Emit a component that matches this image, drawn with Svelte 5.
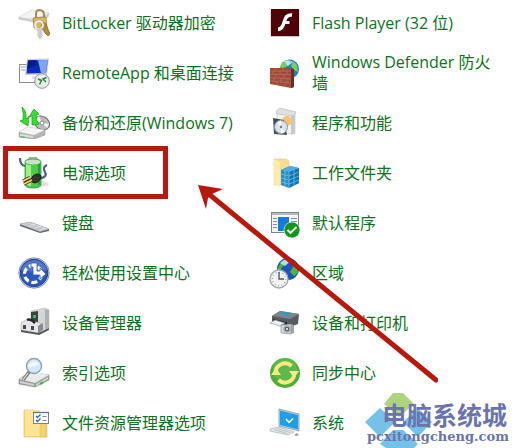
<script>
  const columns = [
    [
      ['bitlocker', 'BitLocker 驱动器加密'],
      ['remote', 'RemoteApp 和桌面连接'],
      ['backup', '备份和还原(Windows 7)'],
      ['power', '电源选项'],
      ['keyboard', '键盘'],
      ['ease', '轻松使用设置中心'],
      ['devices', '设备管理器'],
      ['index', '索引选项'],
      ['explorer', '文件资源管理器选项']
    ],
    [
      ['flash', 'Flash Player (32 位)'],
      ['firewall', 'Windows Defender 防火墙'],
      ['programs', '程序和功能'],
      ['workfolders', '工作文件夹'],
      ['defaults', '默认程序'],
      ['region', '区域'],
      ['printers', '设备和打印机'],
      ['sync', '同步中心'],
      ['system', '系统']
    ]
  ];
</script>

{#snippet icon(name)}
  <svg class="icon" viewBox="0 0 32 32" aria-hidden="true">
    {#if name === 'bitlocker'}
      <path d="M1 10 L14 3 L31 6 L30 10 L16 15 L1 12Z" fill="#d2d2d2" stroke="#b5b5b5" stroke-width=".6" />
      <path d="M1 10 L14 3 L31 6 L16 12Z" fill="#f3f3f3" />
      <path d="M18 12 V7 Q18 3 21.500 3 Q26 3 26 8 V12" fill="none" stroke="#a98a45" stroke-width="2" />
      <path d="M15 11 L28 10 L29 20 L16 21Z" fill="#dcb65c" stroke="#9a7833" stroke-width=".7" />
      <path d="M25 15 L28 17 L32 27 L30 29 L27 26 L23 19Z" fill="#b88a30" stroke="#745519" stroke-width=".6" />
      <circle cx="21" cy="18" r="4" fill="none" stroke="#efefef" stroke-width="2.200" />
      <circle cx="21" cy="18" r="5.200" fill="none" stroke="#999" stroke-width=".5" />
      <path d="M20 22 h4 v7 l-2 3 -2-3Z" fill="#ededed" stroke="#999" stroke-width=".6" />
      <path d="M22 23 v7" stroke="#999" stroke-width=".8" />
    {:else if name === 'remote'}
      <rect x="1.500" y="7.500" width="20" height="18" fill="#fcfcfc" stroke="#8b8f94" />
      <path d="M3 10 h18 M3 13 h6" stroke="#9ea5ab" />
      <path d="M9 2 L31 1.500 L29 18 L7 18Z" fill="#c9cfd8" />
      <path d="M10 3.500 L30 3 L28 16 L8.500 16.500Z" fill="#0b2bb8" />
      <path d="M20 3.300 L30 3 L28 16 L23 16.200Z" fill="#7da6ef" />
      <path d="M10 3.500 L18 3 L19 8 L9.200 12Z" fill="#071c86" />
      <path d="M14 19 h7 l2 3 h-9Z" fill="#dde1e6" />
      <circle cx="24" cy="24" r="7.300" fill="#e8ebe9" stroke="#8f9795" />
      <path d="M20 22 l3.500 1.500 -2 4 M28.500 20.500 l-3.500 1.500 3 3" fill="none" stroke="#27863b" stroke-width="1.500" />
    {:else if name === 'backup'}
      <ellipse cx="24" cy="16" rx="8" ry="6.500" transform="rotate(32 24 16)" fill="#bcbcbc" stroke="#6e6e6e" />
      <path d="M24 16 L17 13 L21 9Z M24 16 L31 17 L29 21Z" fill="#f5f5f5" />
      <circle cx="24" cy="16" r="2" fill="#fff" stroke="#888" />
      <path d="M1 25 L10 20 L27 23 V28 L16 32 L1 30Z" fill="#b5b5b5" stroke="#888" stroke-width=".5" />
      <path d="M1 25 L10 20 L27 23 L16 28Z" fill="#f4f4f4" />
      <path d="M2 27 L15 29 V31 L2 29Z" fill="#dedede" />
      <path d="M3 30 h4" stroke="#38c33d" />
      <path d="M4 0 Q9 4 8 12 L11 9 L10 19 L2 14 L5 13 Q6 7 4 0Z" fill="#38dc2e" stroke="#169d18" stroke-width=".7" />
      <path d="M14 18 L14 9 L11 10 L16 2 L21 7 L18 8 Q18 14 21 17 L18 18Z" fill="#38dc2e" stroke="#169d18" stroke-width=".7" />
    {:else if name === 'power'}
      <ellipse cx="22" cy="27" rx="9" ry="3" fill="#e2e2e2" />
      <path d="M2 1 Q2 8 7 9 M21 22 Q30 20 27 15 Q24 10 29 8" fill="none" stroke="#536178" stroke-width="2.200" />
      <rect x="11" y="0" width="8" height="4" rx="1" fill="#b7c5b9" stroke="#718575" stroke-width=".6" />
      <path d="M7 5 Q7 2 15 2 Q23 2 23 5 V28 Q22 31 15 31 Q8 31 7 28Z" fill="#4ec94b" stroke="#2b8531" stroke-width=".7" />
      <path d="M8 7 Q11 9 13 8 V29 Q10 29 8 27Z" fill="#a5ed86" />
      <path d="M20 7 V29 L22 27 V6Z" fill="#25a337" />
      <ellipse cx="15" cy="5" rx="7.600" ry="2.500" fill="#c5e6c3" />
      <path d="M15 19 Q20 15 23 19 Q23 24 17 26 L12 24Z" fill="#37342f" stroke="#161616" />
      <path d="M12 20.500 L5 24 M14 23 L6 27" stroke="#4e3d1e" stroke-width="3.200" />
      <path d="M12 20.500 L5 24 M14 23 L6 27" stroke="#eed17d" stroke-width="1.700" />
    {:else if name === 'keyboard'}
      <path d="M2 17 L12 15 L31 22 V24 L22 26 L2 19Z" fill="#62676d" />
      <path d="M2 17 L12 15 L31 22 L22 24.500Z" fill="#e2e4e6" stroke="#a4a7ab" stroke-width=".6" />
      <path d="M5 16.500 L24 23.500 M8 16 L27 23 M8 19 L14 16 M13 21 L20 18 M18 22.500 L25 20" stroke="#b1b5b9" stroke-width=".7" />
    {:else if name === 'ease'}
      <circle cx="16" cy="16" r="15.200" fill="#e8eef8" stroke="#7f8ca5" />
      <circle cx="16" cy="16" r="13.800" fill="#2c59b9" stroke="#173f9a" />
      <path d="M3 13 Q7 3 17 3 Q26 4 29 13 Q17 16 3 13Z" fill="#7395d7" opacity=".5" />
      <circle cx="15" cy="17" r="8.500" fill="none" stroke="#fff" stroke-width="3.200" stroke-dasharray="6 2.900" />
      <path d="M13 6 H19 V14 H22 V11 L28 17 L22 22 V18 H15 V10 H13Z" fill="#fff" stroke="#2c59b9" stroke-width=".8" />
    {:else if name === 'devices'}
      <path d="M13 4 L27 1 L31 3 V21 L25 23 L13 20Z" fill="#d5d5d7" stroke="#b5b5b5" stroke-width=".5" />
      <path d="M27 2 L31 3 V21 L27 22Z" fill="#aeafb2" />
      <path d="M13 5 L20 4 V15 L13 16Z" fill="#35453a" />
      <path d="M15 8 H18 V11 H15Z" fill="#51a878" />
      <path d="M3 16 L8 13 L23 16 L21 20 V26 L3 23Z" fill="#e7e7e9" stroke="#a4a5a8" stroke-width=".6" />
      <path d="M20 19 L25 16 V23 L20 26Z" fill="#8a8b90" />
      <path d="M9 13 Q12 11 17 16" fill="none" stroke="#262a2d" stroke-width="2.500" />
      <path d="M5 18 h3 v4 H5Z M13 19 h3 v4 h-3Z" fill="#45484e" />
      <path d="M3 23 L20 26 L31 21 V23 L21 28 L3 25Z" fill="#55565a" />
    {:else if name === 'index'}
      <path d="M1 22 L12 15 L31 18 V23 L17 30 L1 27Z" fill="#9a9d9a" stroke="#858985" stroke-width=".6" />
      <path d="M1 22 L13 14 L31 18 L17 26Z" fill="#eaeaea" />
      <path d="M2 24 L16 27 V29 L2 26Z M18 27 L30 20 V22 L18 29Z" fill="#d1d3d0" />
      <path d="M22 27 l3-1.500" stroke="#32bd3a" stroke-width="2" />
      <circle cx="16" cy="9" r="7.500" fill="#d3e9fa" stroke="#8ca1b4" stroke-width="1.400" />
      <path d="M10 8 Q15 2 21 7 Q18 10 10 10Z" fill="#fff" opacity=".7" />
      <path d="M11 15 L5 23" stroke="#777" stroke-width="3.500" />
      <path d="M10 16 L5 23" stroke="#e5e5e5" stroke-width="1.200" />
    {:else if name === 'explorer'}
      <path d="M6 3 H16 V7 H29 V30 H6Z" fill="#f5d778" stroke="#dec073" stroke-width=".7" />
      <path d="M7 3 H22 V29 H7Z" fill="#ffe494" />
      <path d="M22 30 V19 L25 16 L28 19 V30Z" fill="#f4d36f" stroke="#d9b95f" stroke-width=".5" />
      <rect x="15.500" y="5.500" width="15" height="11" fill="#fafbfc" stroke="#7b8289" />
      <path d="M15 5.500 h16" stroke="#6b737b" stroke-width="1.300" />
      <path d="M18 9 l1.500 1.500 3-3 M18 13 l1.500 1.500 3-3" fill="none" stroke="#246bcf" stroke-width="1.300" />
      <path d="M24.500 9.500 h4 M24.500 13.500 h4" stroke="#7b91ad" />
    {:else if name === 'flash'}
      <rect x="2.500" y="3" width="29" height="27" fill="#cfc4c4" />
      <rect x="3" y="2" width="28" height="27" fill="#4c0206" />
      <path d="M24 8 Q18 7.500 16.500 14 Q14.500 22 10 22.500" fill="none" stroke="#fff" stroke-width="3.400" />
      <path d="M15.500 15.500 H21.500" stroke="#fff" stroke-width="3" />
    {:else if name === 'firewall'}
      <circle cx="21.500" cy="12" r="9.500" fill="#2479c9" />
      <path d="M14 6 Q18 2 22 5 L20 9 L15 11 L12 10Z M25 4 L29 8 L30 15 L26 13 L23 9Z" fill="#72d15f" />
      <path d="M16 4 Q21 2 25 5 L20 9Z" fill="#d0f2ec" opacity=".8" />
      <path d="M2 11 L22 11 L26 12 V30 L23 31 L2 27Z" fill="#9d4c3a" />
      <path d="M23 11.500 L26 12 V30 L23 31Z" fill="#673027" />
      <path d="M2 14 H23 M2 17.500 H23 M2 20.500 L23 22 M2 24 L23 26 M7 11 V14 M15 11 V14 M5 14 V17 M12 14 V17 M19 14 V17 M8 17 V20 M16 17 V21 M6 21 V24 M13 21 V25 M19 22 V26 M9 25 V28 M17 26 V29" stroke="#c27863" stroke-width=".6" />
    {:else if name === 'programs'}
      <path d="M9 5 L13 2 L27 6 V27 L9 26Z" fill="#f2f2f2" stroke="#c5c5c5" stroke-width=".6" />
      <path d="M23 9 L27 7 V26 L23 28Z" fill="#c6c8cb" />
      <path d="M8 4 L12 1 L28 5 L26 9 L9 7Z" fill="#dfe0e2" stroke="#aaa" stroke-width=".5" />
      <circle cx="19" cy="14" r="5" fill="#f2c76f" />
      <path d="M5 11 L16 13 L19 28 L6 27Z" fill="#48515b" />
      <circle cx="13" cy="20" r="6.500" fill="#dae2e9" stroke="#8c98a3" />
      <path d="M13 20 L9 15 L13 13.500Z M13 20 L17 25 L13 26.500Z" fill="#fff" />
      <circle cx="13" cy="20" r="2" fill="#77818a" stroke="#fff" />
    {:else if name === 'workfolders'}
      <path d="M6 2 H18 L21 4 V28 H6Z" fill="#f7dc8d" stroke="#e9cb75" stroke-width=".6" />
      <path d="M6 2 L12 5 V30 L6 27Z" fill="#ffeaaa" />
      <path d="M13 13 L22 9 L31 11 V26 L21 31 L13 28Z" fill="#258fcb" />
      <path d="M21 15 L31 11 V26 L21 31Z" fill="#1376b2" />
      <path d="M13 13 L22 9 L31 11 L21 15Z" fill="#50aedd" />
      <path d="M13 17 L21 19 L31 15 M13 21 L21 23 L31 19 M13 25 L21 27 L31 23 M17 14 V29 M21 15 V31 M26 13 V28" fill="none" stroke="#79c4e8" stroke-width=".7" />
    {:else if name === 'defaults'}
      <rect x="3.500" y="5.500" width="27" height="20" fill="#f4f7fa" stroke="#7c8790" />
      <path d="M4 7 H30" stroke="#b4bcc2" stroke-width="2" />
      <path d="M5 11.500 h4 M5 14.500 h4 M5 17.500 h4 M5 20.500 h4 M23 11.500 h6 M23 14.500 h6" stroke="#83909c" />
      <rect x="10" y="10" width="11" height="14" fill="#147cdf" />
      <circle cx="24" cy="23" r="8" fill="#149421" stroke="#fff" stroke-width=".6" />
      <path d="M19.500 23 l3 3 6-6" fill="none" stroke="#fff" stroke-width="1.800" />
    {:else if name === 'region'}
      <circle cx="20" cy="12" r="11" fill="#1d55bd" />
      <path d="M12 7 Q15 2 20 3 L19 7 L14 10 L12 14 L9 13Z M22 2 L29 6 L30 16 L26 19 L22 15 L25 10Z" fill="#48b73b" />
      <path d="M12 6 Q18 0 24 3 L17 9Z" fill="#c7edf7" opacity=".8" />
      <circle cx="11" cy="22" r="9" fill="#f3f3f0" stroke="#aaa" stroke-width="1.400" />
      <circle cx="11" cy="22" r="6.700" fill="none" stroke="#888" stroke-width="1.100" stroke-dasharray=".8 2.700" />
      <path d="M11 15 V22 H16" fill="none" stroke="#51585e" stroke-width="1.400" />
    {:else if name === 'printers'}
      <path d="M4 9 L12 4 L31 7 L30 17 L22 20 L4 16Z" fill="#555c62" />
      <path d="M4 9 L12 4 L31 7 L22 12Z" fill="#7d858b" />
      <path d="M12 6 L16 5 L23 6.500 L19 9Z" fill="#2d9ac6" />
      <path d="M5 12 L19 15 V18 L5 15Z" fill="#242a2f" />
      <path d="M2 16 L7 13 L17 16 L12 19Z" fill="#eceff0" stroke="#8a8f92" stroke-width=".6" />
      <path d="M13 18 L23 17 V27 L13 26Z" fill="#d8dbdd" stroke="#7a7d80" stroke-width=".6" />
      <path d="M23 17 L26 18 V26 L23 27Z" fill="#9ca1a4" />
      <circle cx="19" cy="22" r="3" fill="#55606a" stroke="#aaa" stroke-width="1.500" />
      <circle cx="19" cy="22" r="1" fill="#fff" />
    {:else if name === 'sync'}
      <circle cx="17" cy="16" r="15" fill="#50ad3b" />
      <circle cx="17" cy="13" r="12" fill="#72c75a" opacity=".45" />
      <path d="M7.500 16 A9.500 9.500 0 0 1 23.500 9 M26.500 16 A9.500 9.500 0 0 1 10.500 23" fill="none" stroke="#f4eb84" stroke-width="3.800" />
      <path d="M3 18 L8 11 L13 18Z M21 14 H31 L26 21Z" fill="#f4eb84" />
    {:else if name === 'system'}
      <path d="M11 2 L31 7 V24 L11 19Z" fill="#c8d8e2" stroke="#75858f" stroke-width=".7" />
      <path d="M12 3.500 L30 8 V22.500 L12 18Z" fill="#209de8" />
      <path d="M18 12 l3 3.500 4-4" fill="none" stroke="#fff" stroke-width="1.500" />
      <path d="M2 22 L11 20 L26 25 L20 28 L2 24Z" fill="#e6e9eb" stroke="#9ba3a7" stroke-width=".6" />
      <path d="M6 22.500 L19 26.500 M9 21.500 L22 25.500" stroke="#a8afb4" stroke-width=".7" />
      <path d="M26 28 L29 26 L31 28 L28 29Z" fill="#9aa2a7" />
    {/if}
  </svg>
{/snippet}

<main>
  <nav aria-label="控制面板">
    {#each columns as column}
      <ul>
        {#each column as [name, label]}
          <li>
            <a href="#{name}">{@render icon(name)}<span>{label}</span></a>
          </li>
        {/each}
      </ul>
    {/each}
  </nav>
  <div class="highlight"></div>
  <svg class="arrow" viewBox="0 0 240 200" aria-hidden="true">
    <path d="M238 195 L12 10" stroke="#b8190c" stroke-width="5" stroke-linecap="round" />
    <path d="M0 0 L25 4 L14 9 L10 13 L8 24Z" fill="#b8190c" />
  </svg>
  <div class="watermark">
    <svg class="logo" viewBox="0 0 68 55" aria-hidden="true">
      <path d="M28 0 H38 L49 11 L34 24 L19 11Z" fill="#add381" />
      <path d="M15 15 L30 29 L15 44 L0 29Z M53 15 L67 29 L53 44 L38 29Z M28 37 H38 L53 51 L49 55 H21 L15 51Z" fill="#75c2e9" />
    </svg>
    <strong>电脑系统城</strong>
    <span>pcxitongcheng.com</span>
  </div>
</main>

<style>
  :global(body) {
    margin: 0;
    background: #fff;
  }
  main {
    position: relative;
    min-height: 448px;
    overflow: hidden;
    font: 16px/21px "Open Sans", "Noto Sans CJK SC", sans-serif;
  }
  nav {
    display: grid;
    grid-template-columns: 1fr 1fr;
    column-gap: 17px;
    padding: 7px 14px 0 18px;
  }
  ul {
    display: grid;
    grid-auto-rows: 32px;
    row-gap: 18px;
    align-content: start;
    margin: 0;
    padding: 0;
    list-style: none;
  }
  li {
    display: flex;
    align-items: center;
  }
  a {
    display: flex;
    align-items: center;
    gap: 12px;
    color: #0d7320;
    text-decoration: none;
  }
  .icon {
    flex: none;
    width: 32px;
    height: 32px;
  }
  .highlight {
    position: absolute;
    top: 146px;
    left: 3px;
    box-sizing: border-box;
    width: 165px;
    height: 53px;
    border: 5px solid #b8190c;
  }
  .arrow {
    position: absolute;
    top: 185px;
    left: 198px;
    width: 240px;
    height: 200px;
  }
  .watermark {
    position: absolute;
    right: 0;
    top: 393px;
    width: 150px;
    height: 55px;
    color: #6b74ad;
    white-space: nowrap;
  }
  .logo {
    position: absolute;
    top: 0;
    left: 0;
    width: 68px;
    height: 55px;
  }
  .watermark strong {
    position: relative;
    display: block;
    padding: 8px 0 0 17px;
    font: 700 25px/26px "Noto Sans CJK SC", sans-serif;
  }
  .watermark span {
    position: relative;
    display: block;
    padding-left: 2px;
    font: bold 13px/20px "DejaVu Serif", serif;
  }
</style>
